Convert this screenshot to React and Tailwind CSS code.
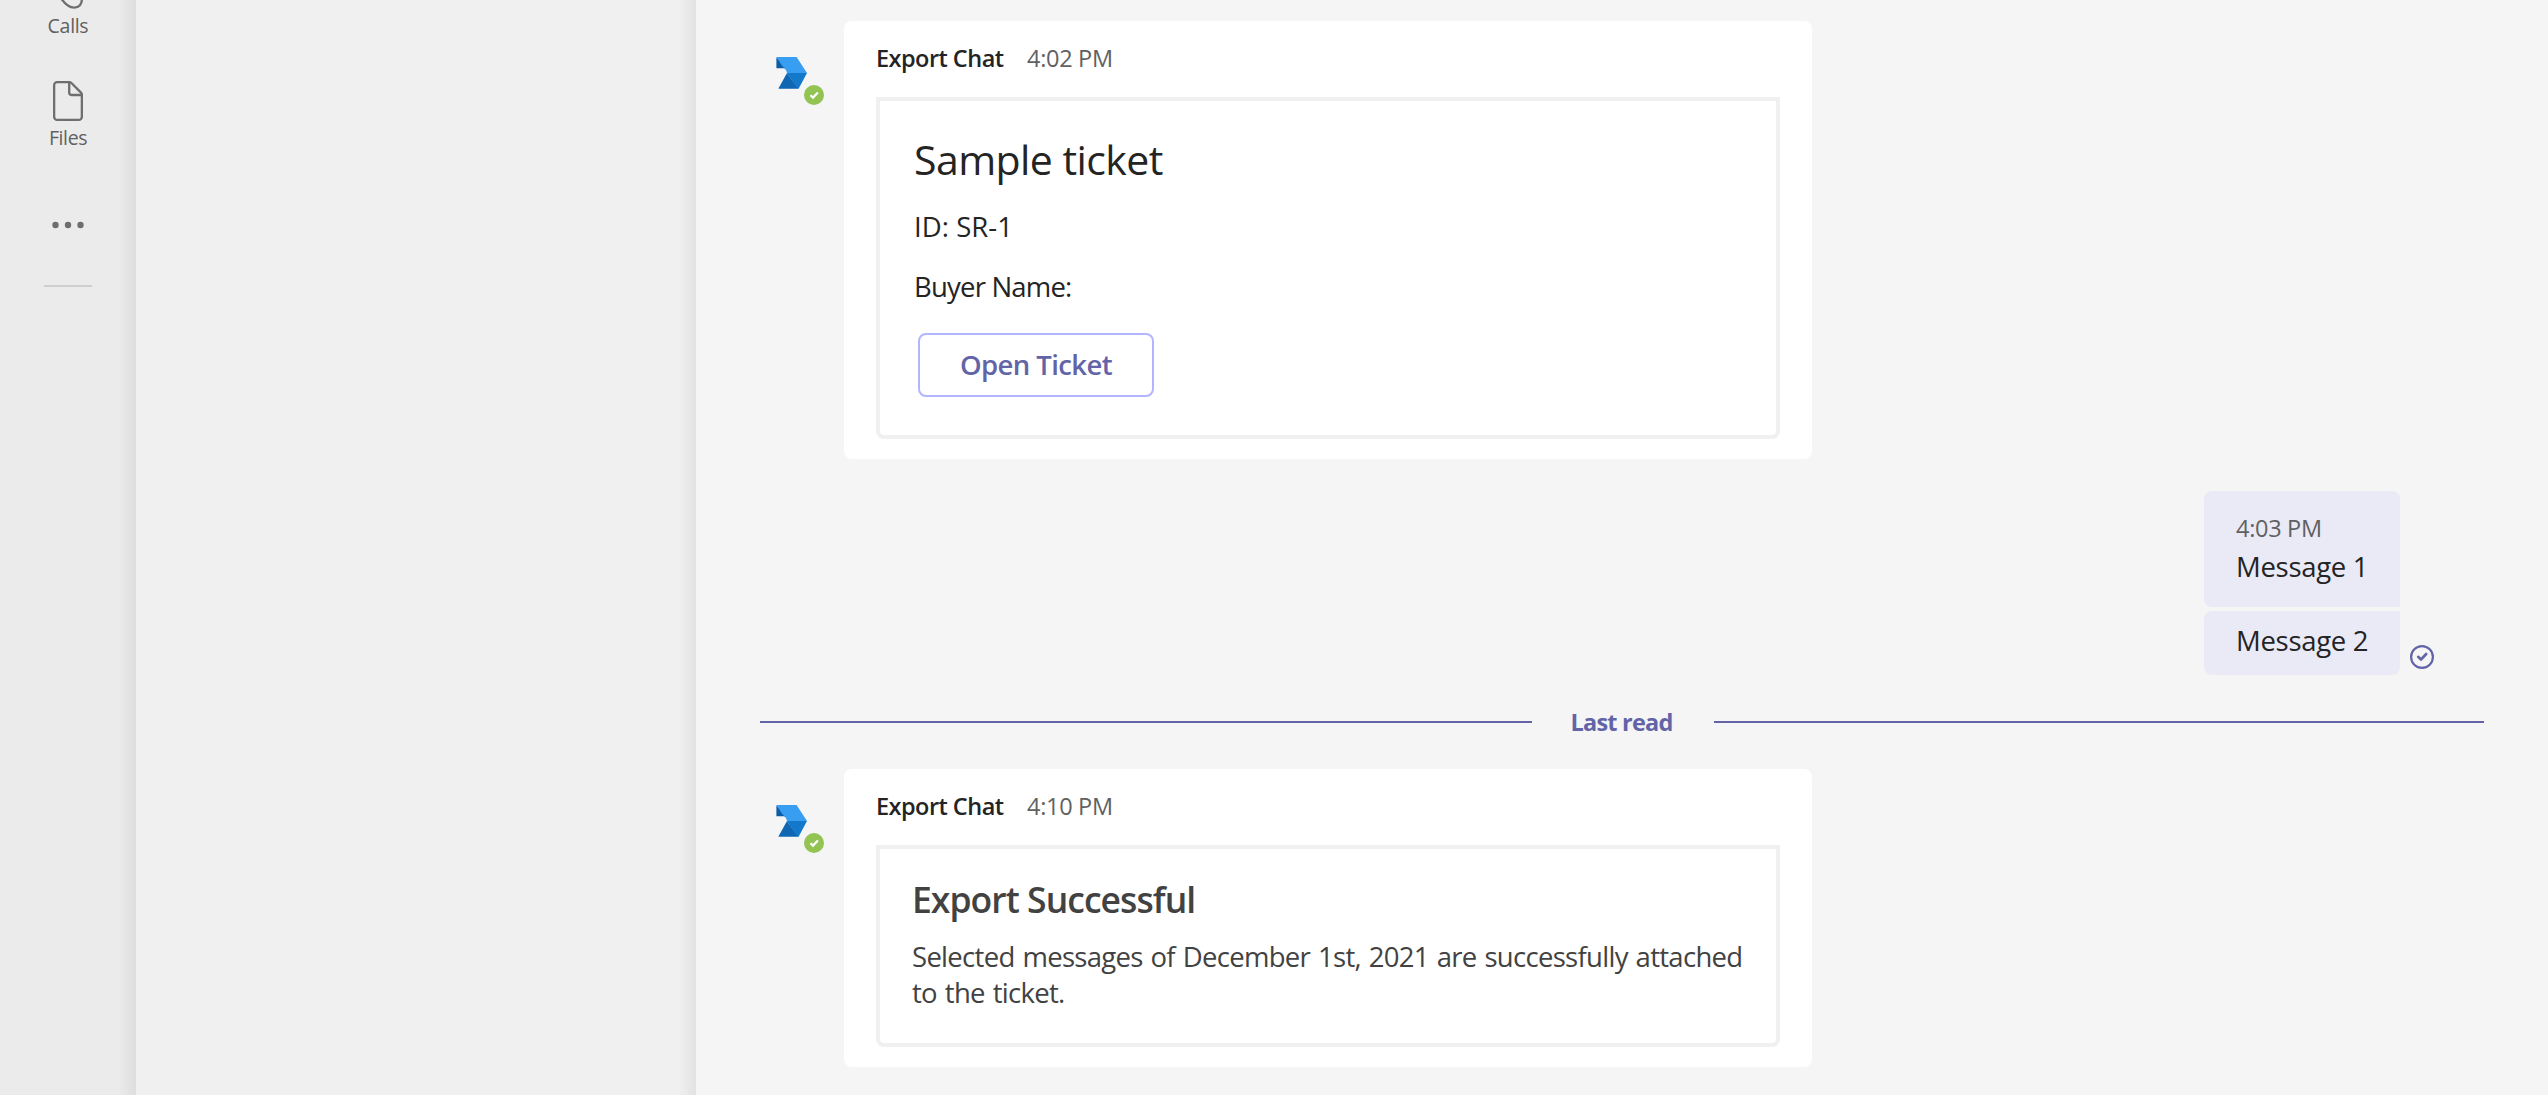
import React from "react";

function BotLogo() {
  return (
    <svg viewBox="0 0 32 32" className="block size-8">
      <path d="M0.4 0.2V11.3H8L12 13 0.4 0.2Z" fill="#0d5ca6" />
      <path d="M0.4 0.1H20.6L31 16.1H11C10.6 13 8.5 11.4 6.6 9.6L0.4 0.1Z" fill="#379ef2" />
      <path d="M11 16H31L22.6 31.8H21.5L11 16Z" fill="#1579cb" />
      <path d="M11 16 22 31.8H3.2C2.6 31.8 2.4 31.4 2.7 30.9L11 16Z" fill="#0f66b2" />
    </svg>
  );
}

function Avatar() {
  return (
    <div className="w-[84px] shrink-0 pl-4 pt-9">
      <div className="relative size-8">
        <BotLogo />
        <svg viewBox="0 0 20 20" className="absolute left-7 top-7 size-5">
          <circle cx="10" cy="10" r="10" fill="#92c353" />
          <path d="M6.5 10.3 9 12.6 13.9 7.6" fill="none" stroke="#fff" strokeWidth="2.2" />
        </svg>
      </div>
    </div>
  );
}

function BotMessage({ time, className, children }) {
  return (
    <div className="flex">
      <Avatar />
      <section className="w-[968px] rounded-lg bg-white px-8 pb-5 pt-[21px]">
        <header className="flex gap-[23.5px] text-[23.5px] leading-8">
          <span className="font-semibold tracking-[-0.53px]">Export Chat</span>
          <time className="tracking-[-0.3px] text-[#616161]">{time}</time>
        </header>
        <div className={`mt-[23px] rounded-b-lg border-4 border-[#f0f0f0] ${className}`}>{children}</div>
      </section>
    </div>
  );
}

function Rail() {
  return (
    <nav className="flex w-[136px] shrink-0 flex-col items-center bg-[#ebebeb] bg-[linear-gradient(to_right,transparent_118px,rgba(0,0,0,0.06)_136px)] text-[19.5px] leading-[27px] text-[#616161]">
      <svg viewBox="0 0 40 12" className="h-3 w-10" fill="none" stroke="#6e6e6e" strokeWidth="2.3">
        <path d="M13.5 -1C17 3.8 22 7.6 26.2 7.6C31 7.6 34.2 4 33.8 -1" />
      </svg>
      <span className="tracking-[-0.3px]">Calls</span>
      <svg viewBox="0 0 30 40" className="mt-[42px] h-10 w-[30px]" fill="none" stroke="#6e6e6e" strokeWidth="2.3" strokeLinejoin="round">
        <path d="M4.2 1.15H16.4C17.2 1.15 17.8 1.4 18.4 2L28 11.6C28.6 12.2 28.85 12.8 28.85 13.6V35.8A3 3 0 0 1 25.85 38.85H4.2A3 3 0 0 1 1.15 35.8V4.2A3 3 0 0 1 4.2 1.15Z" />
        <path d="M16.2 1V11.6A2.4 2.4 0 0 0 18.6 14H29" />
      </svg>
      <span className="mt-[3px] tracking-[-0.4px]">Files</span>
      <svg viewBox="0 0 32 8" className="mt-[70px] h-2 w-8" fill="#6e6e6e">
        <circle cx="3.5" cy="4" r="3.2" />
        <circle cx="16" cy="4" r="3.2" />
        <circle cx="28.5" cy="4" r="3.2" />
      </svg>
      <hr className="mt-14 w-12 border-t-2 border-[#cfcfcf]" />
    </nav>
  );
}

function SentMessages() {
  return (
    <div className="mt-8 flex items-end justify-end pr-[50px]">
      <div className="flex w-[196px] flex-col gap-1 text-[27.5px] leading-[37px] tracking-[-0.3px]">
        <div className="h-[116px] rounded-lg rounded-br-none bg-[#e9eaf6] px-8 pt-[21px]">
          <time className="block text-[23.5px] leading-8 text-[#616161]">4:03 PM</time>
          <p className="mt-1 whitespace-nowrap">Message 1</p>
        </div>
        <div className="h-16 rounded-lg rounded-tr-none bg-[#e9eaf6] px-8 pt-[11px]">
          <p className="whitespace-nowrap">Message 2</p>
        </div>
      </div>
      <svg viewBox="0 0 24 24" className="mb-1.5 ml-2.5 size-6" fill="none" stroke="#6264a7" strokeWidth="2.2">
        <circle cx="12" cy="12" r="10.9" />
        <path d="M8.2 11.8 11 14.5 16.2 9" strokeWidth="2.6" strokeLinecap="round" strokeLinejoin="round" />
      </svg>
    </div>
  );
}

export default function App() {
  return (
    <div className="flex h-[1095px] w-[2548px] overflow-hidden bg-[#f5f5f5] font-['Open_Sans',sans-serif] text-[#242424]">
      <Rail />
      <aside className="w-[560px] shrink-0 bg-[#f0f0f0] bg-[linear-gradient(to_right,transparent_542px,rgba(0,0,0,0.06)_560px)]" />
      <main className="flex-1 px-16 pt-[21px]">
        <BotMessage time="4:02 PM" className="h-[342px] px-[34px] pt-[30px] text-[27.5px] leading-[37px]">
          <h2 className="text-[41px] leading-[56px] tracking-[-0.56px]">Sample ticket</h2>
          <p className="mt-[21px] tracking-[0.05px]">ID: SR-1</p>
          <p className="mt-[23px] tracking-[-0.8px]">Buyer Name:</p>
          <button className="ml-1 mt-7 block h-16 w-[236px] rounded-lg border-2 border-[#b2b5ff] pb-0.5 font-semibold tracking-[-0.6px] text-[#6264a7]">
            Open Ticket
          </button>
        </BotMessage>
        <SentMessages />
        <div className="mt-[31px] flex items-center">
          <div className="h-0.5 w-[772px] bg-[#6264a7]" />
          <span className="w-[182px] pr-[3px] text-center text-[23.5px] font-bold leading-8 tracking-[-0.79px] text-[#6264a7]">Last read</span>
          <div className="h-0.5 flex-1 bg-[#6264a7]" />
        </div>
        <div className="mt-[31px]">
          <BotMessage time="4:10 PM" className="h-[202px] pl-8 pt-[26px] text-[#424242]">
            <h2 className="text-[35.5px] font-semibold leading-[48px] tracking-[-0.95px]">Export Successful</h2>
            <p className="mt-4 whitespace-nowrap text-[27.5px] leading-9 tracking-[-0.7px] [word-spacing:1.4px]">
              Selected messages of December 1st, 2021 are successfully attached
              <br />
              to the ticket.
            </p>
          </BotMessage>
        </div>
      </main>
    </div>
  );
}
